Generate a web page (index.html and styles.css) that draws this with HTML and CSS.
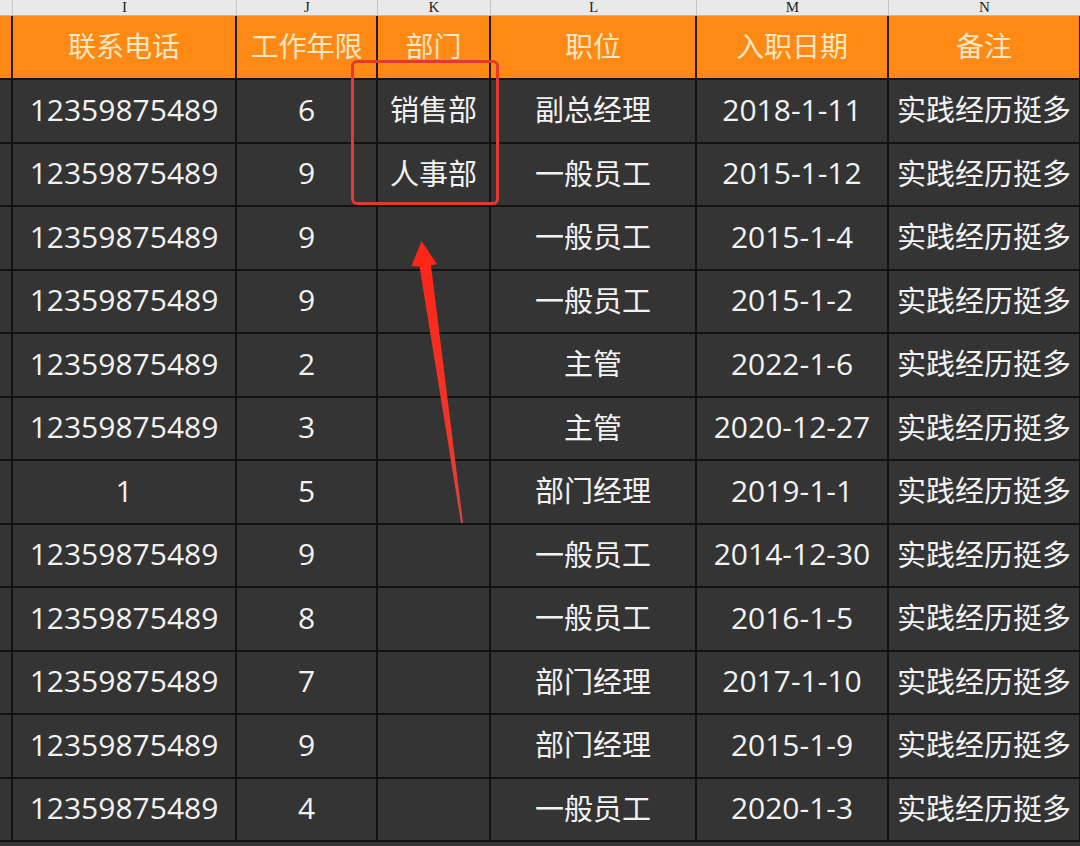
FILE: index.html
```html
<!DOCTYPE html>
<html lang="zh-CN">
<head>
<meta charset="utf-8">
<title>表格</title>
<link rel="stylesheet" href="styles.css">
</head>
<body>
<div class="page">
  <div class="sheet">
    <div class="c col"></div>
    <div class="c col">I</div>
    <div class="c col">J</div>
    <div class="c col">K</div>
    <div class="c col">L</div>
    <div class="c col">M</div>
    <div class="c col">N</div>

    <div class="c hd"></div>
    <div class="c hd">联系电话</div>
    <div class="c hd">工作年限</div>
    <div class="c hd">部门</div>
    <div class="c hd">职位</div>
    <div class="c hd">入职日期</div>
    <div class="c hd">备注</div>

    <div class="c"></div><div class="c">12359875489</div><div class="c">6</div><div class="c zh">销售部</div><div class="c zh">副总经理</div><div class="c">2018-1-11</div><div class="c zh">实践经历挺多</div>
    <div class="c"></div><div class="c">12359875489</div><div class="c">9</div><div class="c zh">人事部</div><div class="c zh">一般员工</div><div class="c">2015-1-12</div><div class="c zh">实践经历挺多</div>
    <div class="c"></div><div class="c">12359875489</div><div class="c">9</div><div class="c"></div><div class="c zh">一般员工</div><div class="c">2015-1-4</div><div class="c zh">实践经历挺多</div>
    <div class="c"></div><div class="c">12359875489</div><div class="c">9</div><div class="c"></div><div class="c zh">一般员工</div><div class="c">2015-1-2</div><div class="c zh">实践经历挺多</div>
    <div class="c"></div><div class="c">12359875489</div><div class="c">2</div><div class="c"></div><div class="c zh">主管</div><div class="c">2022-1-6</div><div class="c zh">实践经历挺多</div>
    <div class="c"></div><div class="c">12359875489</div><div class="c">3</div><div class="c"></div><div class="c zh">主管</div><div class="c">2020-12-27</div><div class="c zh">实践经历挺多</div>
    <div class="c"></div><div class="c">1</div><div class="c">5</div><div class="c"></div><div class="c zh">部门经理</div><div class="c">2019-1-1</div><div class="c zh">实践经历挺多</div>
    <div class="c"></div><div class="c">12359875489</div><div class="c">9</div><div class="c"></div><div class="c zh">一般员工</div><div class="c">2014-12-30</div><div class="c zh">实践经历挺多</div>
    <div class="c"></div><div class="c">12359875489</div><div class="c">8</div><div class="c"></div><div class="c zh">一般员工</div><div class="c">2016-1-5</div><div class="c zh">实践经历挺多</div>
    <div class="c"></div><div class="c">12359875489</div><div class="c">7</div><div class="c"></div><div class="c zh">部门经理</div><div class="c">2017-1-10</div><div class="c zh">实践经历挺多</div>
    <div class="c"></div><div class="c">12359875489</div><div class="c">9</div><div class="c"></div><div class="c zh">部门经理</div><div class="c">2015-1-9</div><div class="c zh">实践经历挺多</div>
    <div class="c"></div><div class="c">12359875489</div><div class="c">4</div><div class="c"></div><div class="c zh">一般员工</div><div class="c">2020-1-3</div><div class="c zh">实践经历挺多</div>
  </div>

  <div class="highlight"></div>

  <svg class="arrow" width="1080" height="846" viewBox="0 0 1080 846" xmlns="http://www.w3.org/2000/svg">
    <defs>
      <linearGradient id="ag" x1="0" y1="0" x2="0" y2="1">
        <stop offset="0" stop-color="#ff2414"/>
        <stop offset="0.7" stop-color="#f0362a"/>
        <stop offset="1" stop-color="#d8453c"/>
      </linearGradient>
    </defs>
    <polygon points="421.5,241 437,264 431,265.5 463,523 461,523 419.5,266.5 411.5,266" fill="url(#ag)"/>
  </svg>
</div>
</body>
</html>
```

FILE: styles.css
```css
html, body {
  margin: 0;
  padding: 0;
  background: #343434;
}

.page {
  position: relative;
  width: 1080px;
  height: 846px;
  overflow: hidden;
  background: #343434;
}

.sheet {
  display: grid;
  grid-template-columns: 13px 224px 141px 113px 206px 192px 192px;
  grid-template-rows: 16px 64px repeat(12, 63.5px);
  width: 1081px;
}

.c {
  box-sizing: border-box;
  display: flex;
  align-items: center;
  justify-content: center;
  padding-bottom: 2px;
  background: #343434;
  color: #f2f2f2;
  border-right: 2px solid #121212;
  border-bottom: 2px solid #121212;
  font-family: "Open Sans", "Noto Sans CJK SC", sans-serif;
  font-size: 30px;
  line-height: 1;
  white-space: nowrap;
  overflow: hidden;
}

.zh {
  font-size: 29px;
}

.col {
  padding-bottom: 0;
  background: #e9e9e9;
  color: #1e1e1e;
  border-right: 1px solid #c4c4c4;
  border-bottom: 1px solid #b8b8b8;
  align-items: flex-end;
  font-family: "Liberation Serif", serif;
  font-size: 15px;
  line-height: 15px;
}

.hd {
  padding-bottom: 3px;
  background: #fe8915;
  color: #fde7c2;
  border-right-color: #2a1608;
  border-bottom-color: #1a1410;
  font-size: 28px;
}

.highlight {
  position: absolute;
  left: 351px;
  top: 60px;
  width: 148px;
  height: 145px;
  box-sizing: border-box;
  border: 3px solid #e23a2e;
  border-radius: 6px;
}

.arrow {
  position: absolute;
  left: 0;
  top: 0;
}
```
